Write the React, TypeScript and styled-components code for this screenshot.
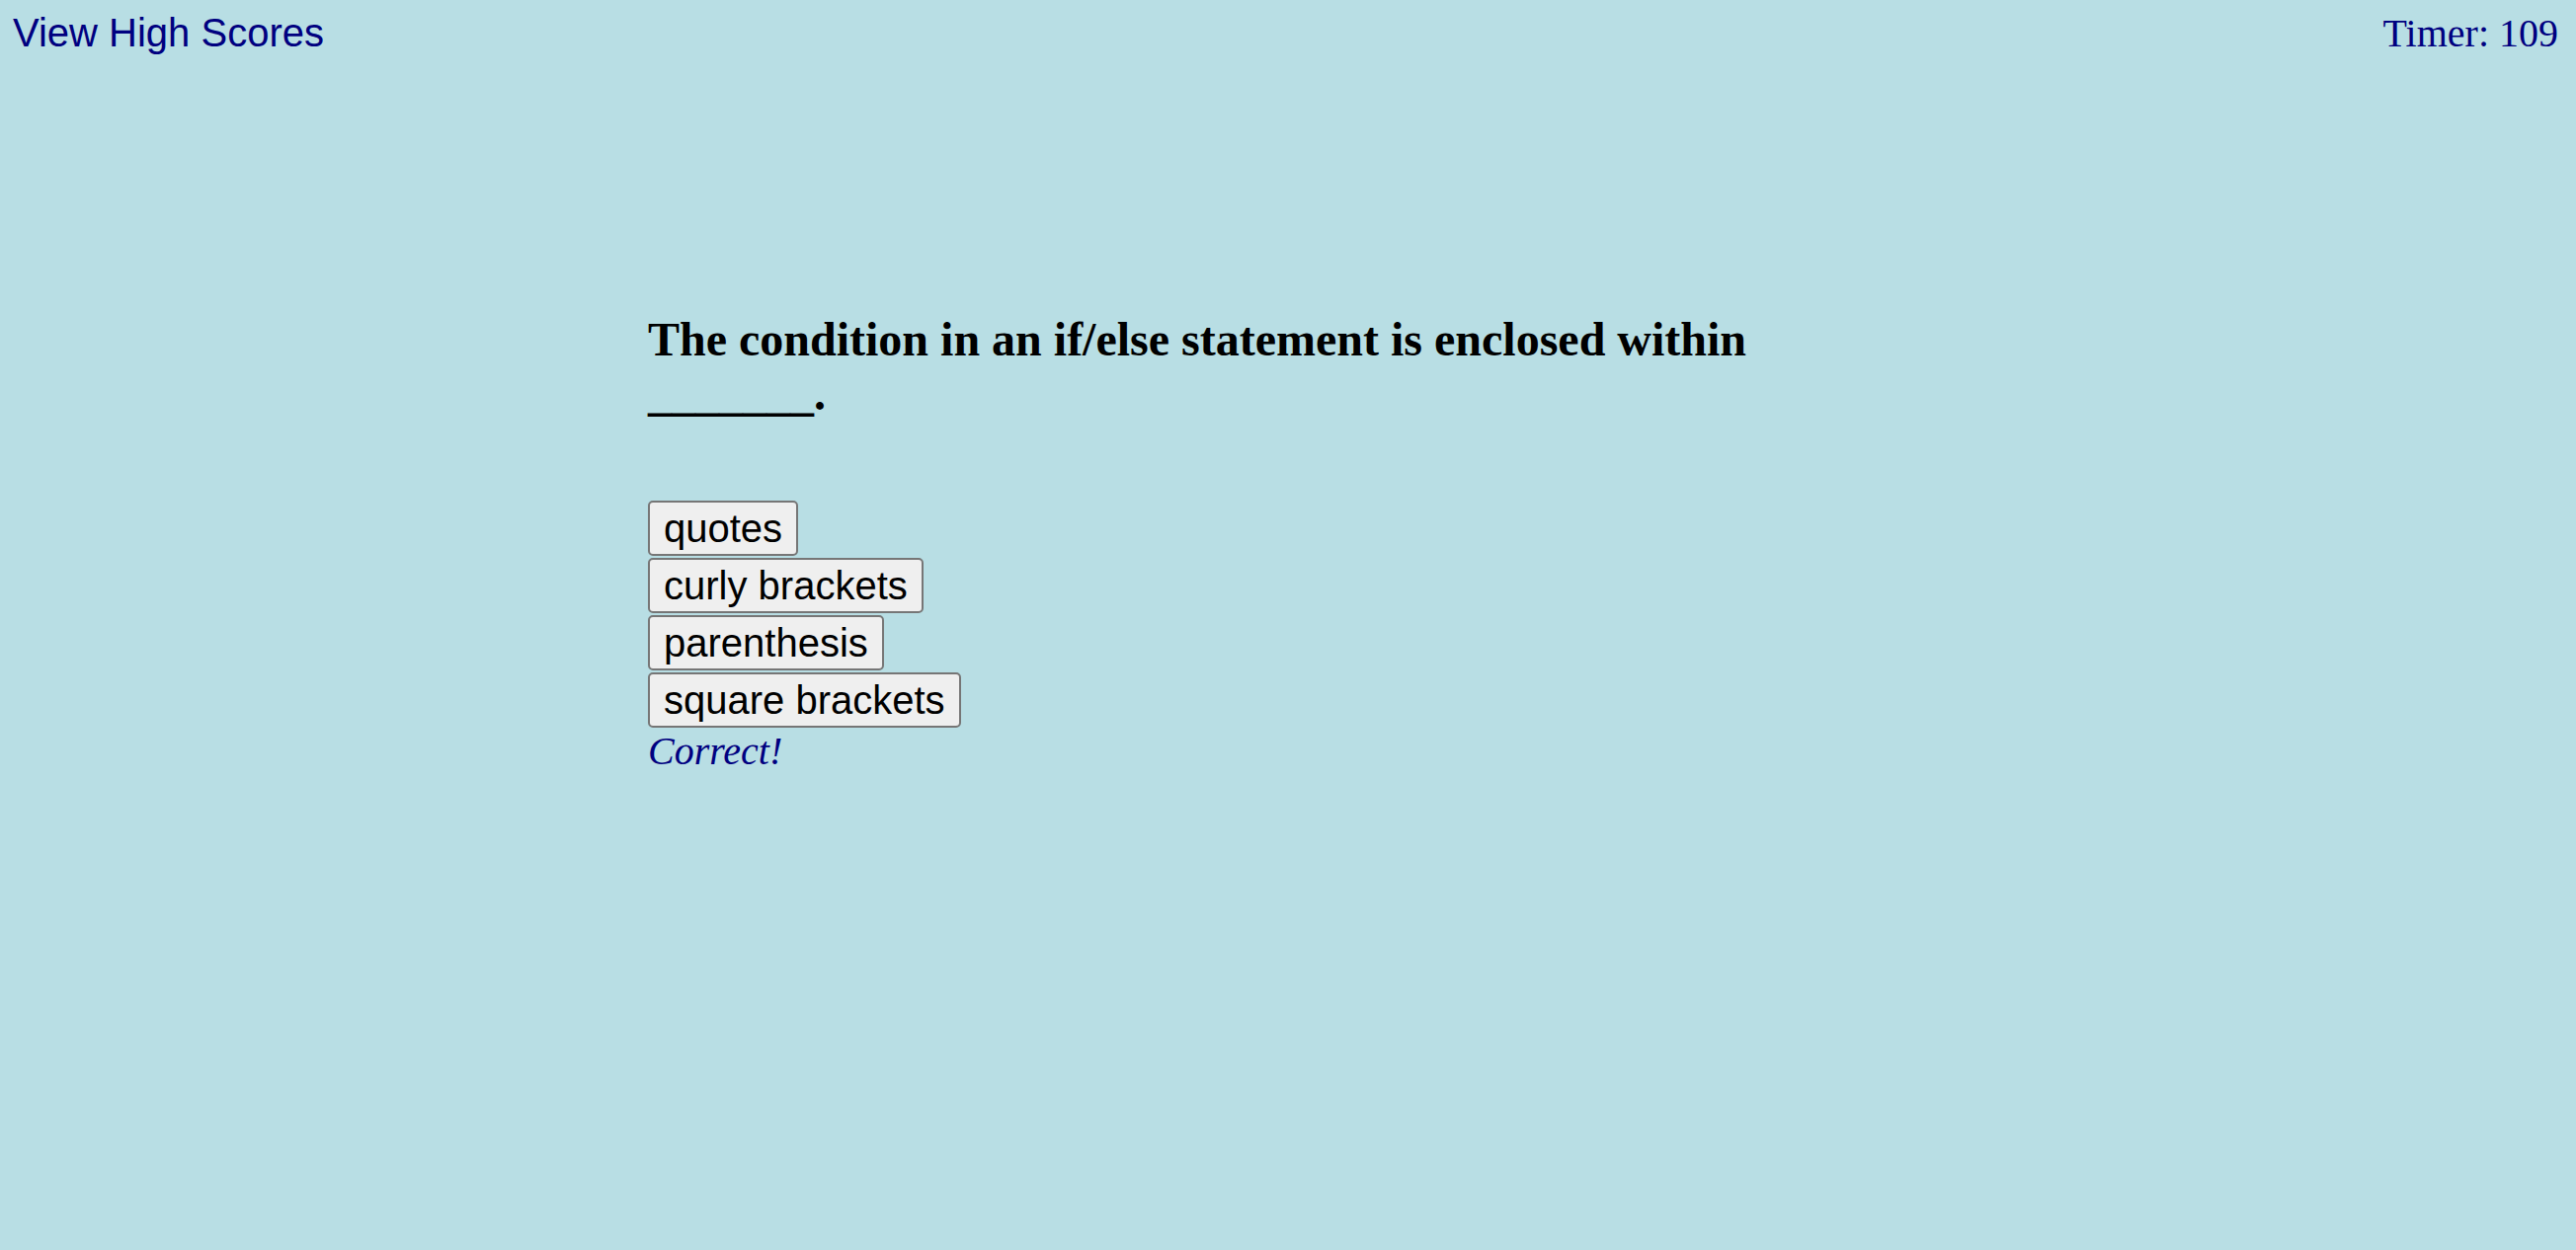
import React from "react";
import styled, { createGlobalStyle } from "styled-components";

const GlobalStyle = createGlobalStyle`
  html, body {
    background: #b8dee4;
  }
  body {
    margin: 8px;
    font-family: "Liberation Serif", "Times New Roman", serif;
  }
`;

const Header = styled.header`
  display: flex;
  justify-content: space-between;
  align-items: baseline;
  padding: 2px 10px 0 5px;
`;

const HighScoresLink = styled.a`
  font-family: "Liberation Sans", Arial, sans-serif;
  font-size: 40px;
  color: #000080;
  text-decoration: none;
  cursor: pointer;
`;

const Timer = styled.div`
  font-family: "Liberation Serif", "Times New Roman", serif;
  font-size: 40px;
  color: #000080;
`;

const Main = styled.main`
  margin-left: 25%;
  width: 50%;
  padding-top: 259px;
`;

const Question = styled.h2`
  font-family: "Liberation Serif", "Times New Roman", serif;
  font-size: 48px;
  font-weight: bold;
  color: #000;
  margin: 0 0 81px;
`;

const Choices = styled.div`
  display: flex;
  flex-direction: column;
  align-items: flex-start;
  gap: 2px;
`;

const ChoiceButton = styled.button`
  font-family: "Liberation Sans", Arial, sans-serif;
  font-size: 40px;
  color: #000;
  background: #efefef;
  border: 2px solid #767676;
  border-radius: 5px;
  padding: 3.5px 14px;
  margin: 0;
  line-height: normal;
  cursor: pointer;
`;

const Feedback = styled.p`
  font-family: "Liberation Serif", "Times New Roman", serif;
  font-style: italic;
  font-size: 40px;
  color: #000080;
  margin: 0;
`;

const choices = ["quotes", "curly brackets", "parenthesis", "square brackets"];

export default function App() {
  return (
    <>
      <GlobalStyle />
      <Header>
        <HighScoresLink>View High Scores</HighScoresLink>
        <Timer>Timer: 109</Timer>
      </Header>
      <Main>
        <Question>
          The condition in an if/else statement is enclosed within _______.
        </Question>
        <Choices>
          {choices.map((c) => (
            <ChoiceButton key={c}>{c}</ChoiceButton>
          ))}
        </Choices>
        <Feedback>Correct!</Feedback>
      </Main>
    </>
  );
}
